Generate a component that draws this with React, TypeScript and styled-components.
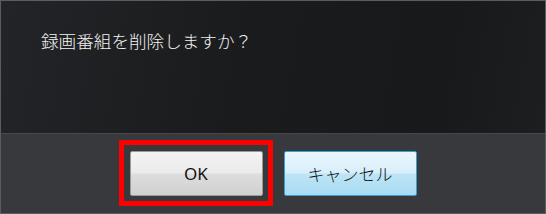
import React from 'react';
import styled, { createGlobalStyle } from 'styled-components';

const GlobalStyle = createGlobalStyle`
  html, body {
    margin: 0;
    padding: 0;
    background: #2a2b2d;
  }
`;

// Dialog frame
const Dialog = styled.div`
  width: 546px;
  height: 214px;
  box-sizing: border-box;
  border: 1px solid #5a5e61;
  display: flex;
  flex-direction: column;
  font-family: 'Noto Sans CJK JP', 'Noto Sans', sans-serif;
`;

// Message area
const MessageArea = styled.div`
  height: 132px;
  box-sizing: border-box;
  padding: 27px 0 0 40px;
  background: linear-gradient(100deg, #232427 0%, #1a1b1d 45%, #18191b 80%, #1d1e20 100%);
`;

const Message = styled.p`
  margin: 0;
  color: #f2f2f2;
  font-size: 17.6px;
  line-height: 26px;
  font-weight: 300;
`;

// Button bar
const ButtonBar = styled.div`
  flex: 1;
  border-top: 1px solid #46484b;
  background: #38393c;
  display: flex;
  justify-content: center;
  align-items: flex-start;
  gap: 21px;
  padding-top: 17px;
`;

const Highlight = styled.div`
  position: relative;

  &::after {
    content: '';
    position: absolute;
    left: -11px;
    right: -10px;
    top: -11px;
    bottom: -10px;
    border: 5px solid #ff0000;
    pointer-events: none;
  }
`;

const Button = styled.button<{ $primary?: boolean }>`
  width: 133px;
  height: 45px;
  box-sizing: border-box;
  margin: 0;
  padding: 0;
  border: 1px solid ${(p) => (p.$primary ? '#3aa0d4' : '#9a9a9a')};
  border-radius: 2px;
  background: ${(p) =>
    p.$primary
      ? 'linear-gradient(#eaf6fd 0%, #d9effb 48%, #bde4f6 52%, #a9dbf3 100%)'
      : 'linear-gradient(#f3f3f3 0%, #ebebeb 48%, #dddddd 52%, #d0d0d0 100%)'};
  color: #111;
  font-family: 'Noto Sans', 'Noto Sans CJK JP', sans-serif;
  font-size: 17px;
  font-weight: ${(p) => (p.$primary ? 300 : 400)};
  cursor: pointer;
`;

export default function App() {
  return (
    <>
      <GlobalStyle />
      <Dialog>
        <MessageArea>
          <Message>録画番組を削除しますか？</Message>
        </MessageArea>
        <ButtonBar>
          <Highlight>
            <Button>OK</Button>
          </Highlight>
          <Button $primary>キャンセル</Button>
        </ButtonBar>
      </Dialog>
    </>
  );
}
